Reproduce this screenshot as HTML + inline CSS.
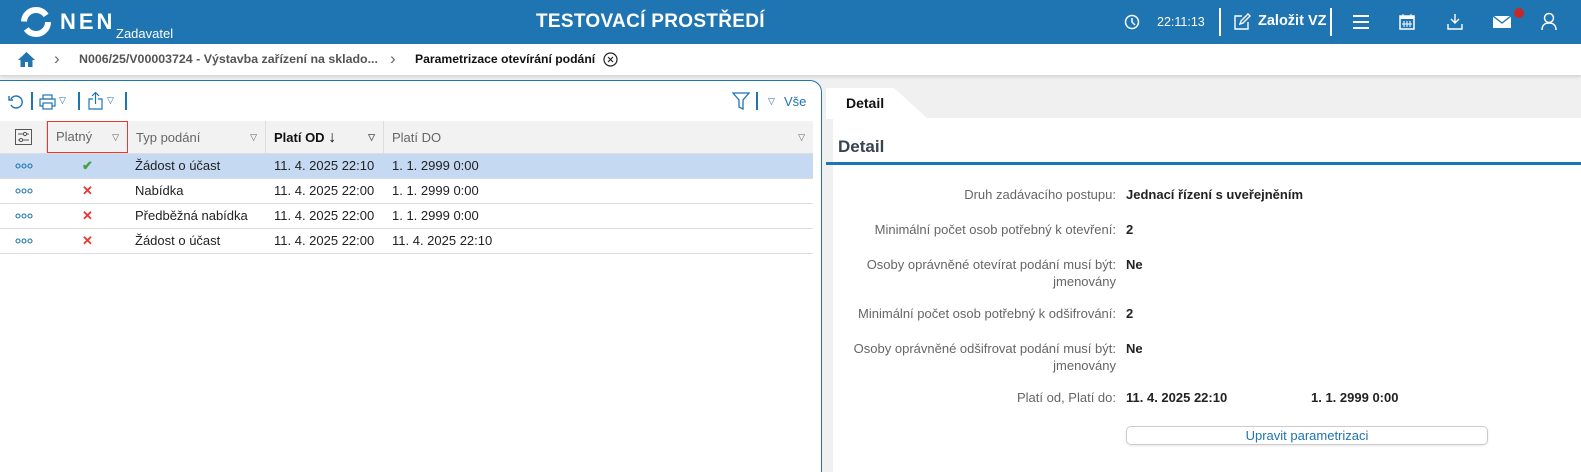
<!DOCTYPE html>
<html><head><meta charset="utf-8"><style>
*{box-sizing:border-box;margin:0;padding:0}
html{width:1581px;height:472px;overflow:hidden}
body{width:1581px;height:472px;overflow:hidden;background:#f0f0f0;font-family:"Liberation Sans",sans-serif;font-size:13px;color:#222;position:relative}
.hdr{position:absolute;left:0;top:0;width:1581px;height:44px;background:#1f74b2;color:#fff}
.abs{position:absolute}
.bc{position:absolute;top:44px;left:0;width:1581px;height:31px;background:#fff;box-shadow:0 2px 3px rgba(0,0,0,.12)}
.lp{position:absolute;left:0;top:80px;width:822px;height:392px;background:#fff;border-top:1px solid #1f74b2;border-right:1px solid #1f74b2;border-radius:0 12px 0 0}
.th{position:absolute;top:40px;left:0;width:813px;height:33px;background:#f2f2f2;border-bottom:1px solid #ddd}
.th div{position:absolute;top:0;height:33px;line-height:33px;color:#666;border-right:1px solid #ddd;padding-left:8px}
.tri{position:absolute;right:8px;top:0;font-size:9px;color:#666}
.row{position:absolute;left:0;width:813px;height:25px;border-bottom:1px solid #ddd;line-height:24px}
.row span{position:absolute;top:0}
.rp{position:absolute;left:833px;top:118px;width:748px;height:354px;background:#fff}
.lab{position:absolute;right:465px;text-align:right;color:#666;width:270px;line-height:17px}
.val{position:absolute;left:293px;font-weight:bold;color:#222;line-height:17px}
</style></head><body>
<div class="hdr">
 <svg class="abs" style="left:20px;top:6px" width="32" height="32" viewBox="0 0 32 32"><circle cx="16" cy="16" r="12" fill="none" stroke="#fff" stroke-width="6" stroke-dasharray="30 8"/></svg>
 <div class="abs" style="left:60px;top:9px;font-size:22px;font-weight:bold;letter-spacing:3px">NEN</div>
 <div class="abs" style="left:116px;top:26px;font-size:13px">Zadavatel</div>
 <div class="abs" style="left:536px;top:11px;font-size:19px;font-weight:bold;letter-spacing:.3px">TESTOVACÍ PROSTŘEDÍ</div>
 <svg class="abs" style="left:1124px;top:14px" width="16" height="16" viewBox="0 0 16 16"><circle cx="8" cy="8" r="6.5" fill="none" stroke="#fff" stroke-width="1.5"/><path d="M8 4v4l3 3" stroke="#fff" stroke-width="1.5" fill="none"/></svg>
 <div class="abs" style="left:1157px;top:15px;font-size:12.5px">22:11:13</div>
 <div class="abs" style="left:1219px;top:8px;width:2px;height:28px;background:#fff"></div>
 <svg class="abs" style="left:1233px;top:13px" width="18" height="18" viewBox="0 0 18 18"><path d="M9 3H2v13h13V9M7 11l1-3 7-7 2 2-7 7z" fill="none" stroke="#fff" stroke-width="1.4"/></svg>
 <div class="abs" style="left:1258px;top:13px;font-size:14.5px;font-weight:bold">Založit VZ</div>
 <div class="abs" style="left:1330px;top:8px;width:2px;height:28px;background:#fff"></div>
 <svg class="abs" style="left:1352px;top:14px" width="18" height="16"><path d="M1 2h16M1 8h16M1 14h16" stroke="#fff" stroke-width="2"/></svg>
 <svg class="abs" style="left:1399px;top:13px" width="16" height="17"><rect x="1" y="3" width="14" height="13" fill="none" stroke="#fff" stroke-width="1.5"/><rect x="1" y="3" width="14" height="3" fill="#fff"/><path d="M4 1v3M12 1v3M5 8v6M8 8v6M11 8v6M3 11h10" stroke="#fff" stroke-width="1"/></svg>
 <svg class="abs" style="left:1446px;top:13px" width="18" height="18"><path d="M9 1v9M5 6l4 4 4-4M2 11v5h14v-5" fill="none" stroke="#fff" stroke-width="1.4"/></svg>
 <svg class="abs" style="left:1493px;top:15px" width="18" height="14"><rect x="0" y="1" width="18" height="12" fill="#fff"/><path d="M0 1l9 7 9-7" stroke="#1f74b2" stroke-width="1.3" fill="none"/></svg>
 <div class="abs" style="left:1514px;top:8px;width:10px;height:10px;border-radius:50%;background:#c62828"></div>
 <svg class="abs" style="left:1541px;top:12px" width="16" height="19"><circle cx="8" cy="6" r="4.5" fill="none" stroke="#fff" stroke-width="1.5"/><path d="M1 18c0-5 3-7 7-7s7 2 7 7" fill="none" stroke="#fff" stroke-width="1.5"/></svg>
</div>
<div class="bc">
 <svg class="abs" style="left:17px;top:7px" width="19" height="17"><path d="M9.5 1L1 9h2.5v7h4.5v-5h3v5h4.5V9H18z" fill="#1f74b2"/></svg>
 <div class="abs" style="left:54px;top:5px;color:#666;font-size:17px">&#x203A;</div>
 <div class="abs" style="left:79px;top:8px;color:#555;font-weight:bold;font-size:12.4px">N006/25/V00003724 - Výstavba zařízení na sklado...</div>
 <div class="abs" style="left:390px;top:5px;color:#666;font-size:17px">&#x203A;</div>
 <div class="abs" style="left:415px;top:8px;color:#111;font-weight:bold;font-size:12.2px">Parametrizace otevírání podání</div>
 <svg class="abs" style="left:603px;top:8px" width="15" height="15"><circle cx="7.5" cy="7.5" r="6.5" fill="none" stroke="#222" stroke-width="1.2"/><path d="M5 5l5 5M10 5l-5 5" stroke="#222" stroke-width="1.2"/></svg>
</div>
<div class="lp">
 <svg class="abs" style="left:8px;top:13px" width="17" height="16"><path d="M3 5a6 6 0 1 1 0 6" fill="none" stroke="#1f74b2" stroke-width="1.4"/><path d="M1 2v4h4" fill="none" stroke="#1f74b2" stroke-width="1.4"/></svg>
 <div class="abs" style="left:31px;top:11px;width:2px;height:18px;background:#1f74b2"></div>
 <svg class="abs" style="left:39px;top:13px" width="17" height="16"><rect x="4" y="1" width="9" height="4" fill="none" stroke="#1f74b2" stroke-width="1.2"/><rect x="1" y="5" width="15" height="7" fill="none" stroke="#1f74b2" stroke-width="1.2"/><rect x="4" y="9" width="9" height="6" fill="#fff" stroke="#1f74b2" stroke-width="1.2"/></svg>
 <div class="abs" style="left:59px;top:14px;font-size:9px;color:#1f74b2">▽</div>
 <div class="abs" style="left:78px;top:11px;width:2px;height:18px;background:#1f74b2"></div>
 <svg class="abs" style="left:88px;top:11px" width="15" height="18"><path d="M5 7H1v10h13V7h-4M7.5 12V1M4 4l3.5-3.5L11 4" fill="none" stroke="#1f74b2" stroke-width="1.2"/></svg>
 <div class="abs" style="left:107px;top:14px;font-size:9px;color:#1f74b2">▽</div>
 <div class="abs" style="left:125px;top:11px;width:2px;height:18px;background:#1f74b2"></div>
 <svg class="abs" style="left:732px;top:11px" width="18" height="18"><path d="M1 1h16l-6 7v9l-4-2V8z" fill="none" stroke="#1f74b2" stroke-width="1.3"/></svg>
 <div class="abs" style="left:756px;top:11px;width:2px;height:18px;background:#1f74b2"></div>
 <div class="abs" style="left:768px;top:15px;font-size:9px;color:#1f74b2">▽</div>
 <div class="abs" style="left:784px;top:13px;color:#1f74b2">Vše</div>
 <div class="th">
  <div style="left:0;width:47px"><svg style="position:absolute;left:15px;top:8px" width="17" height="16"><rect x=".5" y=".5" width="16" height="15" fill="none" stroke="#555"/><path d="M3 5h11M3 11h11" stroke="#555"/><circle cx="10" cy="5" r="1.6" fill="#f2f2f2" stroke="#555"/><circle cx="6" cy="11" r="1.6" fill="#f2f2f2" stroke="#555"/></svg></div>
  <div style="left:47px;width:81px;border:1px solid #e53935;height:32px;line-height:30px">Platný<span class="tri">▽</span></div>
  <div style="left:128px;width:138px">Typ podání<span class="tri">▽</span></div>
  <div style="left:266px;width:118px;color:#111;font-weight:bold">Platí OD <span style="font-weight:normal;font-size:16px">↓</span><span class="tri">▽</span></div>
  <div style="left:384px;width:429px;border:none">Platí DO<span class="tri">▽</span></div>
 </div>
 <div class="row" style="top:73px;background:#c5daf2"><span style="left:15px"><svg width="18" height="24"><g fill="none" stroke="#1f74b2" stroke-width="1.1"><circle cx="3" cy="12" r="2"/><circle cx="9" cy="12" r="2"/><circle cx="15" cy="12" r="2"/></g></svg></span><span style="left:82px;color:#43a047;font-weight:bold">✔</span><span style="left:135px">Žádost o účast</span><span style="left:274px">11. 4. 2025 22:10</span><span style="left:392px">1. 1. 2999 0:00</span></div>
 <div class="row" style="top:98px"><span style="left:15px"><svg width="18" height="24"><g fill="none" stroke="#1f74b2" stroke-width="1.1"><circle cx="3" cy="12" r="2"/><circle cx="9" cy="12" r="2"/><circle cx="15" cy="12" r="2"/></g></svg></span><span style="left:82px;color:#e53935;font-weight:bold">✕</span><span style="left:135px">Nabídka</span><span style="left:274px">11. 4. 2025 22:00</span><span style="left:392px">1. 1. 2999 0:00</span></div>
 <div class="row" style="top:123px"><span style="left:15px"><svg width="18" height="24"><g fill="none" stroke="#1f74b2" stroke-width="1.1"><circle cx="3" cy="12" r="2"/><circle cx="9" cy="12" r="2"/><circle cx="15" cy="12" r="2"/></g></svg></span><span style="left:82px;color:#e53935;font-weight:bold">✕</span><span style="left:135px">Předběžná nabídka</span><span style="left:274px">11. 4. 2025 22:00</span><span style="left:392px">1. 1. 2999 0:00</span></div>
 <div class="row" style="top:148px"><span style="left:15px"><svg width="18" height="24"><g fill="none" stroke="#1f74b2" stroke-width="1.1"><circle cx="3" cy="12" r="2"/><circle cx="9" cy="12" r="2"/><circle cx="15" cy="12" r="2"/></g></svg></span><span style="left:82px;color:#e53935;font-weight:bold">✕</span><span style="left:135px">Žádost o účast</span><span style="left:274px">11. 4. 2025 22:00</span><span style="left:392px">11. 4. 2025 22:10</span></div>
</div>
<svg class="abs" style="left:826px;top:88px" width="104" height="31"><path d="M0 0h68l34 31H0z" fill="#fff"/></svg>
<div class="abs" style="left:846px;top:95px;font-weight:bold;font-size:14px;color:#111">Detail</div>
<div class="rp">
 <div class="abs" style="left:5px;top:19px;font-size:17px;font-weight:bold;color:#3a4450">Detail</div>
 <div class="abs" style="left:-7px;top:44px;width:755px;height:3px;background:#1f74b2"></div>
 <div class="lab" style="top:68px">Druh zadávacího postupu:</div><div class="val" style="top:68px">Jednací řízení s uveřejněním</div>
 <div class="lab" style="top:103px;width:300px">Minimální počet osob potřebný k otevření:</div><div class="val" style="top:103px">2</div>
 <div class="lab" style="top:138px">Osoby oprávněné otevírat podání musí být: jmenovány</div><div class="val" style="top:138px">Ne</div>
 <div class="lab" style="top:187px;width:300px">Minimální počet osob potřebný k odšifrování:</div><div class="val" style="top:187px">2</div>
 <div class="lab" style="top:222px">Osoby oprávněné odšifrovat podání musí být: jmenovány</div><div class="val" style="top:222px">Ne</div>
 <div class="lab" style="top:271px">Platí od, Platí do:</div><div class="val" style="top:271px">11. 4. 2025 22:10</div><div class="val" style="top:271px;left:478px">1. 1. 2999 0:00</div>
 <div class="abs" style="left:293px;top:308px;width:362px;height:19px;border:1px solid #ccc;border-radius:5px;text-align:center;line-height:17px;color:#1f74b2;box-shadow:0 1px 2px rgba(0,0,0,.1)">Upravit parametrizaci</div>
</div>
</body></html>
